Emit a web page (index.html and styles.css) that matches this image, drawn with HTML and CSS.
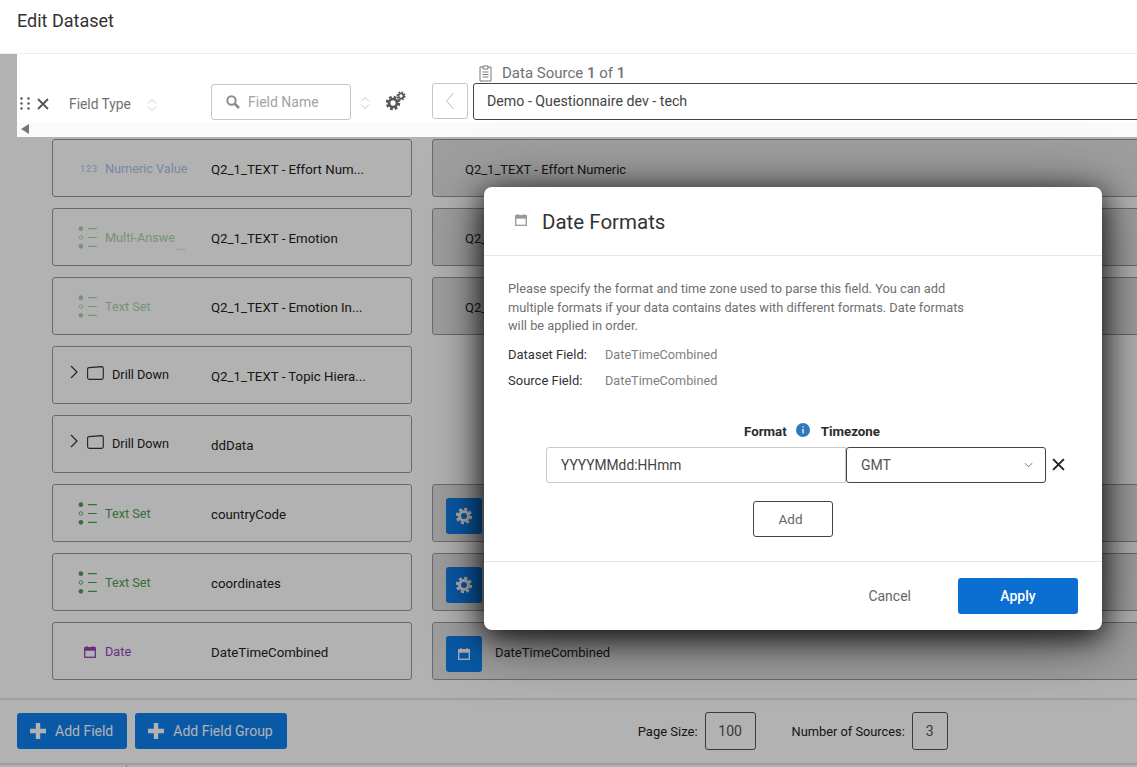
FILE: index.html
```html
<!DOCTYPE html>
<html lang="en">
<head>
<meta charset="utf-8">
<title>Edit Dataset</title>
<link rel="stylesheet" href="styles.css">
</head>
<body>
<svg class="defs" width="0" height="0" aria-hidden="true">
  <symbol id="i-cal" viewBox="0 0 12 12"><path d="M3 0v2M9 0v2" stroke="currentColor" stroke-width="1.3" fill="none"/><rect x=".7" y="1.7" width="10.6" height="9.6" fill="none" stroke="currentColor" stroke-width="1.3"/><rect x=".7" y="1.7" width="10.6" height="3" fill="currentColor"/></symbol>
  <symbol id="i-list" viewBox="0 0 22 26"><circle cx="3" cy="3" r="2.6" fill="currentColor"/><circle cx="3" cy="13" r="2" fill="none" stroke="currentColor" stroke-width="1"/><circle cx="3" cy="23" r="2.6" fill="currentColor"/><path d="M11 3h10M11 13h10M11 23h10" stroke="currentColor" stroke-width="1.4"/></symbol>
  <symbol id="i-gear" viewBox="0 0 20 20"><circle cx="10" cy="10" r="5" fill="none" stroke="currentColor" stroke-width="3.4"/><circle cx="10" cy="10" r="7.6" fill="none" stroke="currentColor" stroke-width="3" stroke-dasharray="3.4 2.57"/></symbol>
  <symbol id="i-folder" viewBox="0 0 17 14"><path d="M2 1.6 14.5.6c1 0 1.8.6 1.8 1.6v9.6c0 1-.7 1.6-1.6 1.6H2.2C1.3 13.4.6 12.8.6 11.8V3c0-.8.5-1.3 1.4-1.4z" fill="none" stroke="currentColor" stroke-width="1.1"/></symbol>
  <symbol id="i-sort" viewBox="0 0 10 14"><path d="M1 5.5 5 1.5l4 4M1 8.5l4 4 4-4" fill="none" stroke="currentColor" stroke-width="1"/></symbol>
  <symbol id="i-chev" viewBox="0 0 8 14"><path d="M1 1l6 6-6 6" fill="none" stroke="currentColor" stroke-width="1.2"/></symbol>
  <symbol id="i-x" viewBox="0 0 12 12"><path d="M1 1l10 10M11 1 1 11" fill="none" stroke="currentColor" stroke-width="1.8"/></symbol>
  <symbol id="i-plus" viewBox="0 0 16 16"><path d="M8 0v16M0 8h16" stroke="currentColor" stroke-width="4.4"/></symbol>
</svg>

<div class="page">
  <header class="top-bar"><h1 class="page-title">Edit Dataset</h1></header>

  <section class="toolbar">
    <div class="toolbar-main">
      <svg class="drag" viewBox="0 0 10 13" aria-hidden="true"><g fill="currentColor"><circle cx="1.5" cy="1.5" r="1.2"/><circle cx="8.5" cy="1.5" r="1.2"/><circle cx="1.5" cy="6.5" r="1.2"/><circle cx="8.5" cy="6.5" r="1.2"/><circle cx="1.5" cy="11.5" r="1.2"/><circle cx="8.5" cy="11.5" r="1.2"/></g></svg>
      <svg class="tool-x"><use href="#i-x"/></svg>
      <span class="field-type">Field Type</span>
      <svg class="sort sort-type"><use href="#i-sort"/></svg>
      <div class="search">
        <svg class="search-icon" viewBox="0 0 14 14" aria-hidden="true"><circle cx="5.5" cy="5.5" r="4.2" fill="none" stroke="currentColor" stroke-width="2"/><path d="M8.5 8.5 13 13" stroke="currentColor" stroke-width="2.6"/></svg>
        <span>Field Name</span>
      </div>
      <svg class="sort sort-name"><use href="#i-sort"/></svg>
      <svg class="gears" viewBox="0 0 21 21" aria-hidden="true"><use href="#i-gear" x="0" y="4" width="16" height="16"/><use href="#i-gear" x="11" y="0" width="10" height="10"/></svg>
      <button class="back" type="button"><svg viewBox="0 0 10 18" aria-hidden="true"><path d="M8.5 1 1.5 9l7 8" fill="none" stroke="currentColor" stroke-width="1"/></svg></button>
      <div class="source">
        <div class="source-label">
          <svg class="clip" viewBox="0 0 13 17" aria-hidden="true"><path d="M4 2H1v14h11V2H9M4 1h5v3H4zM3.5 7h6M3.5 9.5h6M3.5 12h6" fill="none" stroke="currentColor" stroke-width="1"/></svg>
          <span>Data Source <b>1</b> of <b>1</b></span>
        </div>
        <div class="source-select">Demo - Questionnaire dev - tech</div>
      </div>
    </div>
    <div class="scroll-strip"><span class="scroll-arrow"></span></div>
  </section>

  <main class="rows">
    <div class="card"><span class="type num-type"><span class="glyph num-glyph">123</span><span>Numeric Value</span></span><span class="name">Q2_1_TEXT - Effort Num...</span></div>
    <div class="card map"><span class="map-text">Q2_1_TEXT - Effort Numeric</span></div>

    <div class="card"><span class="type faded-green"><svg class="glyph list"><use href="#i-list"/></svg><span>Multi-Answe<i class="more">...</i></span></span><span class="name">Q2_1_TEXT - Emotion</span></div>
    <div class="card map"><span class="map-text">Q2_</span></div>

    <div class="card"><span class="type faded-green"><svg class="glyph list"><use href="#i-list"/></svg><span>Text Set</span></span><span class="name">Q2_1_TEXT - Emotion In...</span></div>
    <div class="card map"><span class="map-text">Q2_</span></div>

    <div class="card"><span class="type drill"><svg class="chev"><use href="#i-chev"/></svg><svg class="folder"><use href="#i-folder"/></svg><span>Drill Down</span></span><span class="name">Q2_1_TEXT - Topic Hiera...</span></div>
    <div class="blank"></div>

    <div class="card"><span class="type drill"><svg class="chev"><use href="#i-chev"/></svg><svg class="folder"><use href="#i-folder"/></svg><span>Drill Down</span></span><span class="name">ddData</span></div>
    <div class="blank"></div>

    <div class="card"><span class="type green"><svg class="glyph list"><use href="#i-list"/></svg><span>Text Set</span></span><span class="name">countryCode</span></div>
    <div class="card map with-btn"><span class="map-btn"><svg class="map-gear"><use href="#i-gear"/></svg></span></div>

    <div class="card"><span class="type green"><svg class="glyph list"><use href="#i-list"/></svg><span>Text Set</span></span><span class="name">coordinates</span></div>
    <div class="card map with-btn"><span class="map-btn"><svg class="map-gear"><use href="#i-gear"/></svg></span></div>

    <div class="card"><span class="type purple"><span class="glyph cal-wrap"><svg class="cal"><use href="#i-cal"/></svg></span><span>Date</span></span><span class="name">DateTimeCombined</span></div>
    <div class="card map with-btn"><span class="map-btn"><svg class="map-cal"><use href="#i-cal"/></svg></span><span class="map-text">DateTimeCombined</span></div>
  </main>

  <footer class="bottom-bar">
    <button class="add" type="button"><svg class="plus"><use href="#i-plus"/></svg>Add Field</button>
    <button class="add" type="button"><svg class="plus"><use href="#i-plus"/></svg>Add Field Group</button>
    <span class="page-label">Page Size:</span><span class="num-box box-page">100</span>
    <span class="source-count">Number of Sources:</span><span class="num-box box-src">3</span>
  </footer>
  <div class="bottom-edge"><span class="edge-tick"></span></div>

  <div class="overlay"></div>

  <section class="modal">
    <div class="modal-head">
      <svg class="modal-cal"><use href="#i-cal"/></svg>
      <h2 class="modal-title">Date Formats</h2>
    </div>
    <div class="modal-body">
      <p class="intro">Please specify the format and time zone used to parse this field. You can add multiple formats if your data contains dates with different formats. Date formats will be applied in order.</p>
      <dl class="meta">
        <div class="meta-row"><dt>Dataset Field:</dt><dd>DateTimeCombined</dd></div>
        <div class="meta-row"><dt>Source Field:</dt><dd>DateTimeCombined</dd></div>
      </dl>
      <div class="col-heads"><b>Format</b><svg class="info" viewBox="0 0 14 14" aria-hidden="true"><circle cx="7" cy="7" r="7" fill="#2f78bd"/><path d="M7 6v4.5M7 3.2v1.4" stroke="#fff" stroke-width="1.3"/></svg><b>Timezone</b></div>
      <div class="format-row">
        <div class="format-input">YYYYMMdd:HHmm</div>
        <div class="tz-select"><span>GMT</span><svg class="caret" viewBox="0 0 10 6" aria-hidden="true"><path d="M1 1l4 4 4-4" fill="none" stroke="currentColor" stroke-width="1"/></svg></div>
        <svg class="row-x"><use href="#i-x"/></svg>
      </div>
      <button class="add-format" type="button">Add</button>
    </div>
    <div class="modal-foot">
      <button class="cancel" type="button">Cancel</button>
      <button class="apply" type="button">Apply</button>
    </div>
  </section>
</div>
</body>
</html>
```
FILE: styles.css
```css
* { box-sizing: border-box; }
html, body { margin: 0; padding: 0; }
body { font-family: Roboto, "Liberation Sans", sans-serif; font-size: 13px; color: #222; background: #fff; overflow: hidden; }
button { font: inherit; cursor: pointer; }
.defs { position: absolute; }
.page { position: relative; width: 1137px; height: 767px; overflow: hidden; display: flex; flex-direction: column; background: #fff; }

.top-bar { position: relative; z-index: 2; height: 54px; flex: none; background: #fff; border-bottom: 1px solid #eee; padding: 11px 17px 0; }
.page-title { margin: 0; font-size: 18px; font-weight: 400; line-height: 20px; color: #333; }

.toolbar { position: relative; z-index: 2; flex: none; height: 83px; margin-left: 17px; background: #fff; display: flex; flex-direction: column; }
.toolbar-main { height: 68px; display: flex; align-items: flex-start; flex: none; overflow: hidden; }
.scroll-strip { flex: 1; background: #fafafa; padding: 2px 0 0 4px; }
.scroll-arrow { display: block; width: 0; height: 0; border: 5px solid transparent; border-left: 0; border-right: 8px solid #777; }
.drag { width: 10px; height: 13px; margin: 43px 0 0 3px; color: #555; flex: none; }
.tool-x { width: 12px; height: 12px; margin: 44px 0 0 7px; color: #555; flex: none; }
.field-type { margin: 42px 0 0 20px; line-height: 17px; color: #707070; font-size: 13.8px; flex: none; width: 63px; }
.sort { width: 10px; height: 14px; color: #c8c8c8; flex: none; }
.sort-type { margin: 44px 0 0 15px; }
.search { flex: none; width: 140px; height: 36px; margin: 30px 0 0 54px; border: 1px solid #c6c6c6; border-radius: 3px; display: flex; align-items: center; padding-left: 14px; color: #a3a3a3; font-size: 14px; }
.search-icon { width: 14px; height: 14px; margin-right: 8px; color: #8d8d8d; }
.sort-name { margin: 42px 0 0 9px; }
.gears { width: 21px; height: 21px; margin: 37px 0 0 15px; color: #555; flex: none; }
.back { flex: none; width: 36px; height: 36px; margin: 29px 0 0 26px; padding: 0; background: #fff; border: 1px solid #c6c6c6; border-radius: 3px; color: #bbb; display: flex; align-items: center; justify-content: center; }
.back svg { width: 10px; height: 18px; }
.source { flex: none; width: 700px; margin-left: 5px; padding-top: 9px; }
.source-label { height: 20px; display: flex; align-items: center; color: #707070; font-size: 15px; padding-left: 6px; }
.source-label b { font-weight: 500; }
.clip { width: 13px; height: 17px; margin-right: 10px; color: #777; }
.source-select { height: 37px; border: 1px solid #444; border-radius: 3px; line-height: 35px; padding-left: 13px; color: #444; font-size: 14.2px; }

.rows { flex: 1; display: grid; grid-template-columns: 360px 720px; grid-auto-rows: 58px; column-gap: 20px; row-gap: 11px; padding: 2px 0 0 52px; }
.card { display: flex; align-items: center; height: 58px; border: 1px solid #999; border-radius: 3px; background: #fff; }
.type { flex: none; width: 158px; display: flex; align-items: center; height: 100%; padding-top: 1px; font-size: 12.7px; color: #333; }
.glyph { flex: none; width: 22px; margin: 0 6px 0 24px; }
.name { color: #222; padding-top: 3px; font-size: 13.25px; }
.num-type { color: #a6c6ea; }
.num-glyph { font-size: 9px; letter-spacing: 1px; margin-left: 27px; width: 21px; margin-right: 4px; }
.faded-green { color: #a9d5ab; }
.green { color: #4fa052; }
.purple { color: #9a3fb8; }
.list { height: 23px; }
.more { position: absolute; font-style: normal; margin-top: 9px; font-size: 12px; color: inherit; margin-left: 1px; }
.drill { padding: 0 0 2px 17px; color: #222; }
.chev { width: 8px; height: 14px; margin-right: 9px; color: #333; flex: none; margin-top: -4px; }
.folder { width: 17px; height: 14px; margin-right: 8px; color: #333; flex: none; margin-top: -3px; }
.cal-wrap { display: flex; justify-content: center; margin: 0 4px 0 26px; }
.cal { width: 12px; height: 12px; }
.map { background: #e3e3e3; }
.map-text { padding-left: 32px; color: #222; padding-top: 3px; font-size: 13px; }
.with-btn .map-text { padding-left: 13px; }
.map-btn { width: 36px; height: 36px; margin: 6px 0 0 13px; border-radius: 3px; background: #0f80ee; display: flex; align-items: center; justify-content: center; color: #fff; flex: none; }
.map-gear { width: 18px; height: 18px; }
.map-cal { width: 12px; height: 12px; }
.blank { height: 58px; }

.bottom-bar { flex: none; height: 65px; border-top: 2px solid #e4e4e4; display: flex; align-items: center; padding: 0 0 1px 17px; background: #fff; }
.add { height: 36px; margin-right: 8px; padding: 0 14px 0 13px; border: 0; border-radius: 3px; background: #0f80ee; color: #fff; font-size: 14px; display: flex; align-items: center; }
.plus { width: 16px; height: 16px; margin-right: 9px; }
.page-label { margin-left: 343px; margin-right: 7px; color: #222; }
.num-box { height: 38px; border: 1px solid #555; border-radius: 3px; display: flex; align-items: center; justify-content: center; color: #555; font-size: 14px; }
.box-page { width: 51px; }
.source-count { margin: 0 7px 0 36px; color: #222; font-size: 12.8px; }
.box-src { width: 36px; }
.bottom-edge { flex: none; height: 4px; border-top: 2px solid #e4e4e4; padding-left: 126px; }
.edge-tick { display: block; width: 1px; height: 2px; background: #bbb; }

.overlay { position: absolute; inset: 0; z-index: 1; background: rgba(0,0,0,.3); }

.modal { position: absolute; z-index: 3; left: 484px; top: 187px; width: 618px; height: 443px; background: #fff; border-radius: 8px; box-shadow: 0 6px 28px rgba(0,0,0,.8), 0 10px 60px rgba(0,0,0,.55); display: flex; flex-direction: column; }
.modal-head { height: 69px; flex: none; border-bottom: 1px solid #e6e6e6; display: flex; align-items: center; padding: 2px 0 0 31px; }
.modal-cal { width: 12px; height: 12px; color: #999; margin-right: 15px; margin-top: -4px; }
.modal-title { margin: 0; font-size: 20.5px; font-weight: 400; color: #333; }
.modal-body { flex: 1; padding: 24px 0 0 24px; }
.intro { margin: 0; width: 460px; font-size: 12.8px; line-height: 18.5px; color: #6f6f6f; }
.meta { margin: 10px 0 0; }
.meta-row { display: flex; height: 26px; line-height: 18px; font-size: 13px; }
.meta-row dt { width: 97px; color: #333; }
.meta-row dd { margin: 0; color: #808080; font-size: 12.7px; }
.col-heads { margin: 25px 0 0 236px; height: 18px; display: flex; align-items: center; font-size: 13.3px; color: #2b2b2b; }
.col-heads b { font-weight: 700; }
.info { width: 14px; height: 14px; margin: -3px 11px 0 9px; }
.format-row { display: flex; align-items: center; margin: 6px 0 0 38px; }
.format-input { width: 300px; height: 36px; border: 1px solid #c9c9c9; border-radius: 3px 0 0 3px; padding-left: 14px; line-height: 34px; color: #444; font-size: 13.8px; }
.tz-select { width: 200px; height: 36px; border: 1px solid #444; border-radius: 3px; padding: 0 12px 0 14px; display: flex; align-items: center; justify-content: space-between; color: #555; font-size: 14px; }
.caret { width: 9px; height: 6px; color: #666; }
.row-x { width: 13px; height: 13px; margin-left: 6px; color: #222; }
.add-format { display: block; width: 80px; height: 36px; margin: 18px 0 0 245px; padding: 0 5px 0 0; background: #fff; border: 1px solid #444; border-radius: 3px; color: #666; font-size: 13.5px; }
.modal-foot { height: 69px; flex: none; border-top: 1px solid #e6e6e6; display: flex; align-items: center; justify-content: flex-end; padding: 0 24px 0 0; }
.cancel { border: 0; background: none; color: #666; margin-right: 47px; padding: 0; font-size: 14px; }
.apply { width: 120px; height: 36px; border: 0; border-radius: 3px; background: #0b6ed1; color: #fff; font-weight: 500; font-size: 14px; }
```
